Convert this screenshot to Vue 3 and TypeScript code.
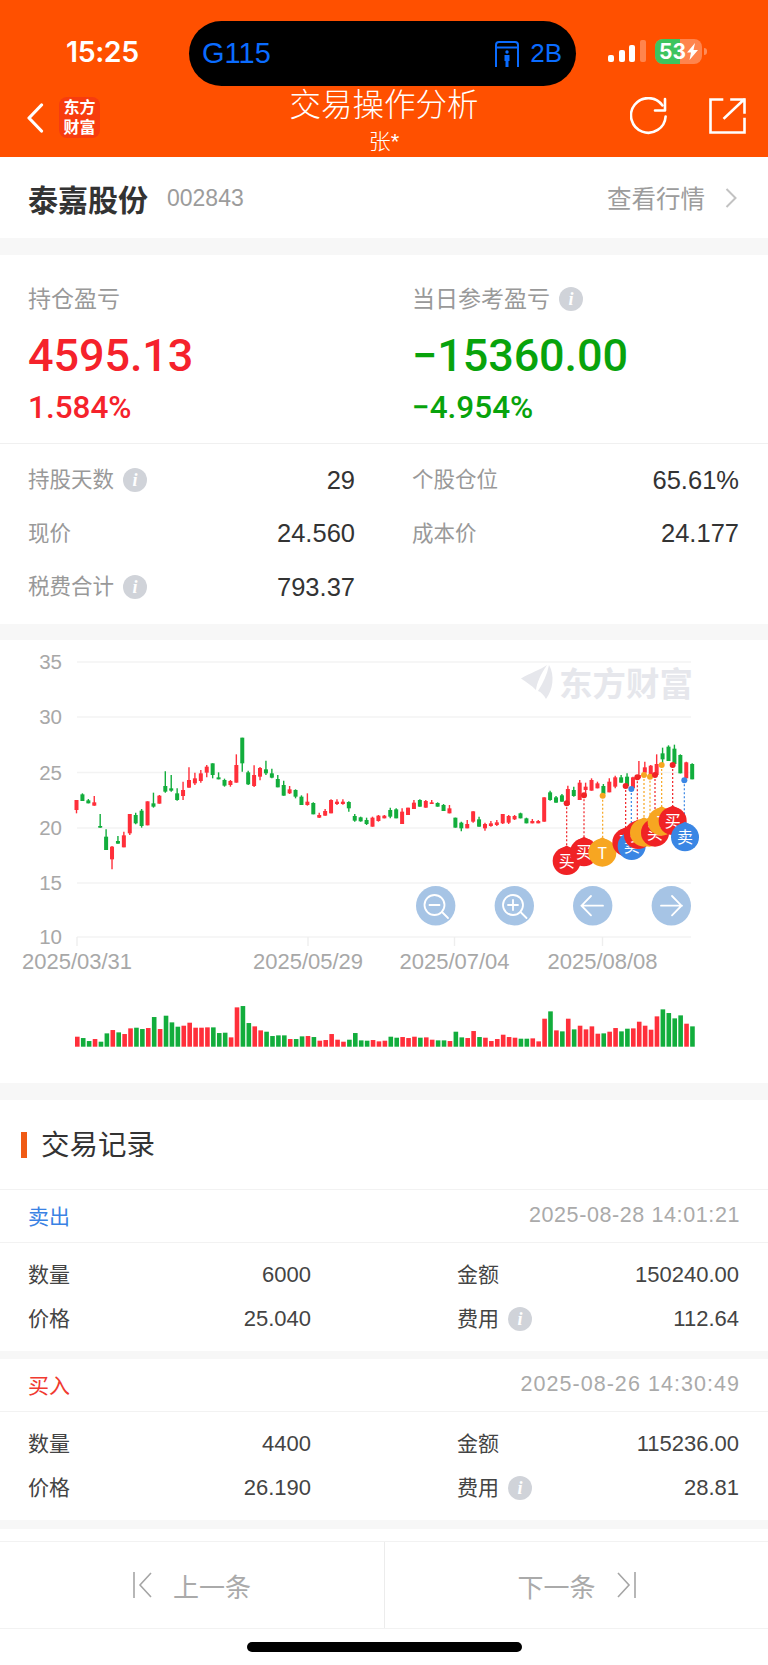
<script setup lang="ts">
type Candle = [number, number, number, number, number]
type Pin = { dx: number; dy: number; cx: number; cy: number; kind: 'buy' | 'sell' | 'toggle'; label: string }

const toY = (v: number) => 640 + v / 3
const toX = (v: number) => 384 + v / 3

const candleRaw: Candle[] = [
  [1,480,480,510,520],[0,460,463,483,483],[0,477,481,490,490],[1,468,487,497,497],[0,522,558,563,563],
  [0,568,590,630,630],[1,618,620,658,688],[0,588,603,611,611],[1,575,586,622,622],[1,522,522,580,585],
  [0,518,525,550,553],[0,507,512,558,563],[1,484,484,556,556],[0,458,490,500,503],[1,465,467,491,491],
  [0,394,438,455,458],[0,405,445,452,455],[0,445,460,480,482],[1,425,450,468,480],[1,382,420,443,443],
  [1,398,415,430,435],[1,390,400,423,428],[1,375,380,398,412],[0,370,370,405,415],[0,397,412,418,418],
  [0,416,420,437,440],[1,420,423,435,440],[1,343,375,428,428],[0,293,293,370,395],[0,392,397,433,435],
  [1,376,405,438,441],[1,381,384,410,421],[0,362,388,400,405],[0,386,400,413,415],[0,405,417,442,442],
  [0,422,435,467,467],[1,438,448,460,462],[0,448,450,470,475],[0,466,470,495,495],[1,460,485,495,497],
  [0,487,489,523,523],[1,518,525,533,534],[1,507,513,527,527],[1,478,480,520,520],[1,478,485,492,495],
  [1,478,485,492,494],[0,484,486,505,515],[0,522,528,542,545],[0,530,532,544,545],[0,533,540,552,555],
  [1,530,533,560,560],[1,525,527,543,545],[1,525,527,535,535],
  [0,503,510,530,535],[0,505,508,535,535],[1,505,515,552,552],[1,503,503,525,525],[1,480,488,507,507],
  [0,478,480,500,500],[1,480,483,503,503],[1,480,487,492,492],[0,487,489,500,500],[0,492,495,513,513],
  [1,495,505,520,520],[0,533,533,563,563],[0,545,548,565,574],[1,540,552,565,565],[1,514,514,545,548],
  [0,530,538,560,560],[1,548,552,565,572],[1,543,550,558,560],[1,540,547,555,558],[1,522,522,550,552],
  [1,525,528,548,552],[1,525,528,538,540],[0,518,520,535,535],[0,533,535,550,550],[1,537,543,550,550],
  [1,540,543,550,550],[1,472,472,545,545],[0,452,457,480,482],[0,468,472,488,488],[0,462,466,485,485],
  [1,437,447,495,497],[0,440,450,468,470],[1,420,428,480,480],[1,428,440,450,462],[1,415,420,452,452],
  [1,425,430,445,445],[0,432,438,462,462],[1,415,425,457,457],[1,407,412,440,445],[0,405,412,428,428],
  [0,400,410,438,438],[1,410,412,445,445],[1,363,405,415,415],[1,365,382,398,405],[1,375,377,405,405],
  [1,343,372,405,405],[0,323,340,358,370],[0,316,320,363,363],[0,314,326,372,372],[0,343,345,400,400],
  [1,365,367,415,415],[0,370,372,418,418],
]

const candles = candleRaw.map((c, i) => ({
  x: 76.5 + 5.92 * i,
  red: c[0] === 1,
  wickTop: toY(c[1]),
  bodyTop: toY(c[2]),
  bodyH: Math.max(1.5, (c[3] - c[2]) / 3),
  wickBottom: toY(c[4]),
}))

const volTopA: [number, number][] = [
  [1,530],[0,534],[0,543],[1,537],[0,545],[0,520],[1,510],[0,517],[1,522],[1,505],[0,503],[0,507],[1,504],
  [0,471],[1,507],[0,467],[0,487],[0,500],[1,497],[1,488],[1,503],[1,503],[1,502],[0,502],[0,519],[0,518],
  [1,532],[1,442],[0,438],[0,489],[1,499],[1,511],[0,515],[0,528],[0,526],[0,526],[1,537],[0,537],[0,529],
  [1,528],[0,531],[1,542],[1,540],[1,522],[1,539],[1,545],[0,539],[0,519],[0,541],[0,542],[1,540],[1,544],
]
const volTopB: [number, number][] = [
  [1,242],[0,230],[0,233],[1,231],[1,234],[1,230],[0,233],[1,232],[1,239],[0,241],[0,241],[1,243],[0,215],
  [0,232],[1,234],[1,213],[0,231],[1,233],[1,243],[1,237],[1,224],[1,231],[1,233],[0,236],[0,236],[1,235],
  [1,244],[1,176],[0,154],[1,211],[0,214],[1,176],[0,208],[1,197],[1,208],[1,199],[1,221],[0,220],[1,215],
  [1,204],[0,214],[0,206],[1,205],[1,185],[1,197],[1,209],[1,169],[0,148],[0,159],[0,175],[0,166],[1,191],[0,199],
]
const volumes = [
  ...volTopA.map(([r, t]) => ({ red: r === 1, h: (560 - t) / 3 })),
  ...volTopB.map(([r, t]) => ({ red: r === 1, h: (260 - t) / 3 })),
].map((v, i) => ({ ...v, x: 75 + 5.915 * i }))

const pinRaw: Pin[] = [
  { dx: 548, dy: 490, cx: 548, cy: 663, kind: 'buy', label: '买' },
  { dx: 600, dy: 466, cx: 600, cy: 637, kind: 'buy', label: '买' },
  { dx: 656, dy: 467, cx: 655, cy: 638, kind: 'toggle', label: 'T' },
  { dx: 725, dy: 438, cx: 727, cy: 607, kind: 'buy', label: '买' },
  { dx: 742, dy: 447, cx: 743, cy: 618, kind: 'sell', label: '卖' },
  { dx: 760, dy: 412, cx: 762, cy: 585, kind: 'buy', label: '买' },
  { dx: 780, dy: 405, cx: 780, cy: 578, kind: 'toggle', label: 'T' },
  { dx: 798, dy: 410, cx: 796, cy: 578, kind: 'toggle', label: 'T' },
  { dx: 813, dy: 405, cx: 813, cy: 578, kind: 'buy', label: '买' },
  { dx: 833, dy: 375, cx: 833, cy: 545, kind: 'toggle', label: 'T' },
  { dx: 866, dy: 375, cx: 866, cy: 543, kind: 'buy', label: '买' },
  { dx: 901, dy: 421, cx: 903, cy: 592, kind: 'sell', label: '卖' },
]
const pinColor = { buy: '#f02225', sell: '#3a86e4', toggle: '#f7a621' }
const pins = pinRaw.map((p) => ({
  x: toX(p.dx),
  y: toY(p.dy),
  cx: toX(p.cx),
  cy: toY(p.cy),
  color: pinColor[p.kind],
  label: p.label,
}))

const gridLines = [
  { y: 662, label: '35', tx: 62 },
  { y: 717, label: '30', tx: 62 },
  { y: 772.5, label: '25', tx: 62 },
  { y: 828, label: '20', tx: 62 },
  { y: 883, label: '15', tx: 62 },
  { y: 937, label: '10', tx: 62 },
]
const ticks = [
  { x: 77, label: '2025/03/31' },
  { x: 308, label: '2025/05/29' },
  { x: 454.5, label: '2025/07/04' },
  { x: 602.5, label: '2025/08/08' },
]

const metrics = [
  { label: '持股天数', info: true, value: '29' },
  { label: '个股仓位', info: false, value: '65.61%' },
  { label: '现价', info: false, value: '24.560' },
  { label: '成本价', info: false, value: '24.177' },
  { label: '税费合计', info: true, value: '793.37' },
]

const records = [
  { side: '卖出', cls: 'sell', time: '2025-08-28 14:01:21', qty: '6000', amount: '150240.00', price: '25.040', fee: '112.64' },
  { side: '买入', cls: 'buy', time: '2025-08-26 14:30:49', qty: '4400', amount: '115236.00', price: '26.190', fee: '28.81' },
]
</script>

<template>
  <div class="page">
    <header class="top">
      <div class="status">
        <span class="time">15:25</span>
        <div class="island">
          <span class="train">G115</span>
          <span class="seat">
            <svg width="26" height="26" viewBox="0 0 26 26" fill="none" stroke="#0a6cff" stroke-width="2">
              <path d="M2 26V4q0-3 3-3h16q3 0 3 3v22M2 6.500h22" />
              <circle cx="13" cy="11" r="1.700" fill="#0a6cff" stroke="none" />
              <path d="M10.500 14h5v6h-1v6h-3v-6h-1z" fill="#0a6cff" stroke="none" />
            </svg>
            <span class="seat-no">2B</span>
          </span>
        </div>
        <div class="signal">
          <i class="bar b1"></i><i class="bar b2"></i><i class="bar b3"></i><i class="bar b4"></i>
        </div>
        <div class="battery">
          <div class="cell">
            <i class="charge"></i>
            <span class="pct">53</span>
            <svg class="bolt" width="11" height="17" viewBox="0 0 11 17"><path d="M8 0 0 9.500h4L2.500 17 11 7H6.500z" fill="#fff" /></svg>
          </div>
          <i class="cap"></i>
        </div>
      </div>
      <div class="nav">
        <div class="nav-left">
          <svg width="18" height="30" viewBox="0 0 18 30" fill="none"><path d="M15.500 2 3 15l12.500 13" stroke="#fff" stroke-width="3.200" stroke-linecap="round" stroke-linejoin="round" /></svg>
          <div class="tile"><span>东方</span><span>财富</span></div>
        </div>
        <div class="nav-title">
          <div class="title">交易操作分析</div>
          <div class="sub">张*</div>
        </div>
        <div class="nav-right">
          <svg width="38" height="38" viewBox="0 0 38 38" fill="none" stroke="#fff" stroke-width="2.600" stroke-linecap="round">
            <path d="M35.600 19.500A17.300 17.300 0 1 1 32.500 8.500" />
            <path d="M35 2v11.500H25" stroke-linejoin="round" />
          </svg>
          <svg width="37" height="36" viewBox="0 0 37 36" fill="none" stroke="#fff" stroke-width="2.600" stroke-linecap="square">
            <path d="M13 1.500H1.500v33h34V21" />
            <path d="M15.500 20 35 1.500M22.500 1.500h13v13" />
          </svg>
        </div>
      </div>
    </header>

    <section class="stock">
      <div class="stock-id">
        <span class="stock-name">泰嘉股份</span>
        <span class="stock-code">002843</span>
      </div>
      <div class="stock-link">
        <span>查看行情</span>
        <svg width="12" height="20" viewBox="0 0 12 20" fill="none"><path d="m1.500 1 9 9-9 9" stroke="#c2c2c2" stroke-width="2" /></svg>
      </div>
    </section>

    <section class="summary">
      <div class="pnl">
        <div class="pnl-col">
          <div class="pnl-label">持仓盈亏</div>
          <div class="pnl-value up">4595.13</div>
          <div class="pnl-pct up">1.584%</div>
        </div>
        <div class="pnl-col">
          <div class="pnl-label">当日参考盈亏<i class="info">i</i></div>
          <div class="pnl-value down">−15360.00</div>
          <div class="pnl-pct down">−4.954%</div>
        </div>
      </div>
      <div class="metrics">
        <div v-for="m in metrics" :key="m.label" class="metric">
          <span class="metric-label">{{ m.label }}<i v-if="m.info" class="info">i</i></span>
          <span class="metric-value">{{ m.value }}</span>
        </div>
      </div>
    </section>

    <section class="chart">
      <svg width="768" height="443" viewBox="0 640 768 443">
        <line v-for="g in gridLines" :key="g.y" x1="77" x2="691" :y1="g.y" :y2="g.y" stroke="#f3f3f3" stroke-width="1.400" />
        <text v-for="g in gridLines" :key="g.label" class="axis" :x="g.tx" :y="g.y + 7" text-anchor="end">{{ g.label }}</text>
        <line v-for="t in ticks" :key="t.x" :x1="t.x" :x2="t.x" y1="937" y2="946" stroke="#eeeeee" stroke-width="1.400" />
        <text v-for="t in ticks" :key="t.label" class="axis date" :x="t.x" y="969" text-anchor="middle">{{ t.label }}</text>

        <path d="M521 678.500C530 673 540 670 547 665 540 675 537 683 536 690 531 685 526 682 521 678.500zM549 665C555 675 553 690 546 699 544 695 541 692 538 691 543 683 547 675 549 665z" fill="#e6e7ec" />
        <text class="mark" x="559" y="696">东方财富</text>

        <g v-for="(c, i) in candles" :key="i">
          <line :x1="c.x" :x2="c.x" :y1="c.wickTop" :y2="c.wickBottom" :stroke="c.red ? '#ff2f3a' : '#12ad3c'" stroke-width="1.400" />
          <rect :x="c.x - 2" :y="c.bodyTop" width="4" :height="c.bodyH" :fill="c.red ? '#ff2f3a' : '#12ad3c'" />
        </g>

        <g v-for="(p, i) in pins" :key="'l' + i">
          <line :x1="p.x" :x2="p.x" :y1="p.y" :y2="p.cy - 14" :stroke="p.color" stroke-width="1.200" stroke-dasharray="2 2" />
          <circle :cx="p.x" :cy="p.y" r="3" :fill="p.color" />
        </g>
        <g v-for="(p, i) in pins" :key="'p' + i">
          <path :d="`M${p.cx} ${p.cy - 15.5}l6.500 3.500h-13z`" :fill="p.color" />
          <circle :cx="p.cx" :cy="p.cy" r="14" :fill="p.color" />
          <text class="pin" :x="p.cx" :y="p.cy + 6" text-anchor="middle">{{ p.label }}</text>
        </g>

        <g fill="none" stroke="#fff" stroke-width="1.800" stroke-linecap="round">
          <circle cx="435.700" cy="905.700" r="19.700" fill="#a6c4e5" stroke="none" />
          <circle cx="434.500" cy="905" r="10" />
          <path d="M429.500 905h10M442 912l6 6" />
          <circle cx="514.300" cy="905.700" r="19.700" fill="#a6c4e5" stroke="none" />
          <circle cx="513" cy="905" r="10" />
          <path d="M508 905h10M513 900v10M520.500 912l6 6" />
          <circle cx="592.700" cy="905.700" r="19.700" fill="#a6c4e5" stroke="none" />
          <path d="M582 905.700h21M591 896l-9.500 9.700 9.500 9.700" />
          <circle cx="671.300" cy="905.700" r="19.700" fill="#a6c4e5" stroke="none" />
          <path d="M661 905.700h21M672 896l9.500 9.700-9.500 9.700" />
        </g>

        <rect v-for="(v, i) in volumes" :key="'v' + i" :x="v.x" :y="1046.7 - v.h" width="4.600" :height="v.h" :fill="v.red ? '#ff2f3a' : '#12ad3c'" />
      </svg>
    </section>

    <section class="records">
      <h2 class="records-title">交易记录</h2>
      <article v-for="r in records" :key="r.time" class="record">
        <div class="record-head">
          <span :class="r.cls">{{ r.side }}</span>
          <span class="record-time">{{ r.time }}</span>
        </div>
        <div class="record-grid">
          <div class="cell-l"><span>数量</span><span>{{ r.qty }}</span></div>
          <div class="cell-r"><span>金额</span><span>{{ r.amount }}</span></div>
          <div class="cell-l"><span>价格</span><span>{{ r.price }}</span></div>
          <div class="cell-r"><span>费用<i class="info">i</i></span><span>{{ r.fee }}</span></div>
        </div>
      </article>
    </section>

    <footer class="pager">
      <div class="pager-btn">
        <svg width="20" height="26" viewBox="0 0 20 26" fill="none" stroke="#a5a5a5" stroke-width="1.600"><path d="M1 0v26M18 1 7 13l11 12" /></svg>
        <span>上一条</span>
      </div>
      <div class="pager-btn">
        <span>下一条</span>
        <svg width="20" height="26" viewBox="0 0 20 26" fill="none" stroke="#a5a5a5" stroke-width="1.600"><path d="M19 0v26M2 1l11 12L2 25" /></svg>
      </div>
    </footer>
    <div class="home-row"><i class="home"></i></div>
  </div>
</template>

<style scoped>
.page {
  width: 768px;
  height: 1665px;
  overflow: hidden;
  background: #f7f7f7;
  font-family: "Liberation Sans", "Noto Sans CJK SC", sans-serif;
  color: #333;
}
.top {
  height: 157px;
  background: #ff5000;
  color: #fff;
}
.status {
  height: 86px;
  display: flex;
  align-items: flex-start;
  padding-left: 66px;
}
.time {
  width: 123px;
  margin-top: 36px;
  font: 600 28.500px/32px Inter, "Liberation Sans", sans-serif;
  letter-spacing: -.4px;
}
.island {
  width: 387px;
  height: 65px;
  margin-top: 21px;
  border-radius: 33px;
  background: #000;
  color: #0a6cff;
  display: flex;
  align-items: center;
  justify-content: space-between;
  padding: 0 14px 0 13px;
  box-sizing: border-box;
}
.train { font-size: 29px; }
.seat { display: flex; align-items: center; gap: 10px; }
.seat-no { font-size: 26px; }
.signal {
  width: 38px;
  height: 22px;
  margin: 40px 0 0 32px;
  display: flex;
  align-items: flex-end;
  gap: 4.500px;
}
.bar { width: 6px; background: #fff; border-radius: 2px; }
.b1 { height: 7px; }
.b2 { height: 12px; }
.b3 { height: 17px; }
.b4 { height: 22px; background: rgba(255, 255, 255, .3); }
.battery {
  margin: 39px 0 0 9px;
  display: flex;
  align-items: center;
  gap: 1.500px;
}
.cell {
  position: relative;
  width: 47px;
  height: 25px;
  border-radius: 8px;
  background: rgba(255, 255, 255, .3);
  overflow: hidden;
  display: flex;
  align-items: center;
}
.charge { position: absolute; left: 0; top: 0; bottom: 0; width: 25px; background: #3dc45f; }
.pct { position: relative; margin-left: 4px; font: 700 21px/25px Inter, "Liberation Sans", sans-serif; }
.bolt { position: relative; margin-left: 1px; }
.cap { width: 3px; height: 7px; border-radius: 0 3px 3px 0; background: rgba(255, 255, 255, .35); }
.nav {
  position: relative;
  height: 71px;
  display: flex;
  align-items: flex-start;
  justify-content: space-between;
  padding: 11px 22px 0 26px;
}
.nav-left { display: flex; align-items: center; gap: 15px; }
.tile {
  width: 41px;
  height: 41px;
  border-radius: 8px;
  background: #f73c0e;
  display: flex;
  flex-direction: column;
  align-items: center;
  justify-content: center;
  font-size: 16px;
  line-height: 20px;
  font-weight: 700;
}
.nav-title {
  position: absolute;
  left: 0;
  right: 0;
  top: 0;
  text-align: center;
}
.title { font-size: 31.500px; line-height: 36px; margin-top: 1px; font-weight: 300; }
.sub { font-size: 22px; line-height: 26px; margin-top: 6px; font-weight: 300; }
.nav-right { display: flex; align-items: center; gap: 41px; }
.stock {
  height: 81px;
  background: #fff;
  display: flex;
  align-items: center;
  justify-content: space-between;
  padding: 0 31px 0 28px;
}
.stock-id { display: flex; align-items: center; gap: 19px; }
.stock-name { font-size: 30px; font-weight: 700; color: #333; }
.stock-code { font-size: 23px; color: #9c9c9c; padding-top: 1px; }
.stock-link { display: flex; align-items: center; gap: 20px; font-size: 24.500px; color: #9c9c9c; }
.summary {
  margin-top: 17px;
  height: 369px;
  background: #fff;
}
.pnl {
  height: 189px;
  box-sizing: border-box;
  display: grid;
  grid-template-columns: 384px 1fr;
  padding: 32px 0 0 28px;
  border-bottom: 1px solid #f0f0f0;
}
.pnl-label {
  display: flex;
  align-items: center;
  font-size: 23px;
  line-height: 24px;
  color: #999;
}
.pnl-value {
  margin-top: 20px;
  font: 500 45px/50px Roboto, "Liberation Sans", sans-serif;
  letter-spacing: -.1px;
}
.pnl-pct {
  margin-top: 11px;
  font: 500 31.500px/32px Roboto, "Liberation Sans", sans-serif;
}
.up { color: #f5222b; }
.down { color: #08a30c; }
.info {
  display: inline-block;
  width: 24px;
  height: 24px;
  margin-left: 9px;
  border-radius: 50%;
  background: #d0d3d9;
  color: #fff;
  font: italic 700 18px/24px "Liberation Serif", serif;
  text-align: center;
  flex: none;
}
.metrics {
  display: grid;
  grid-template-columns: 327px 327px;
  column-gap: 57px;
  grid-auto-rows: 53.500px;
  padding: 9.500px 0 0 28px;
}
.metric {
  display: flex;
  align-items: center;
  justify-content: space-between;
}
.metric-label {
  display: flex;
  align-items: center;
  font-size: 21.500px;
  line-height: 24px;
  color: #999;
}
.metric-value { font-size: 25.500px; color: #333; }
.chart {
  margin-top: 16px;
  height: 443px;
  background: #fff;
}
.chart svg { display: block; }
.axis { font: 400 20.500px "Liberation Sans", sans-serif; fill: #a8a8a8; }
.date { font-size: 22px; }
.mark { font: 700 33.500px "Noto Sans CJK SC", sans-serif; fill: #e6e7ec; }
.pin { font: 400 16px "Noto Sans CJK SC", "Liberation Sans", sans-serif; fill: #fff; }
.records {
  margin-top: 17px;
  height: 429px;
  background: #f7f7f7;
}
.records-title {
  position: relative;
  margin: 0;
  height: 90px;
  box-sizing: border-box;
  padding-left: 41px;
  background: #fff;
  border-bottom: 1px solid #f2f2f2;
  font-size: 28.500px;
  font-weight: 400;
  line-height: 90px;
  color: #333;
}
.records-title::before {
  content: "";
  position: absolute;
  left: 21px;
  top: 32px;
  width: 6px;
  height: 26px;
  background: #f05a14;
}
.record {
  background: #fff;
  margin-bottom: 8px;
}
.record-head {
  height: 53px;
  box-sizing: border-box;
  display: flex;
  align-items: center;
  justify-content: space-between;
  padding: 0 28px 2px;
  border-bottom: 1px solid #f2f2f2;
  font-size: 21px;
}
.sell { color: #3a82e4; }
.buy { color: #f03a30; }
.record-time { color: #aaa; font-size: 21.500px; letter-spacing: .6px; }
.buy + .record-time { letter-spacing: 1.050px; }
.record-grid {
  display: grid;
  grid-template-columns: 283px 282px;
  column-gap: 146px;
  grid-auto-rows: 44px;
  padding: 10px 29px 0 28px;
  height: 108px;
  box-sizing: border-box;
}
.cell-l, .cell-r {
  display: flex;
  align-items: center;
  justify-content: space-between;
  font-size: 22px;
  color: #444;
}
.cell-l span:first-child, .cell-r span:first-child {
  display: flex;
  align-items: center;
  font-size: 21px;
  line-height: 24px;
  margin-bottom: 1px;
}
.pager {
  height: 88px;
  box-sizing: border-box;
  display: grid;
  grid-template-columns: 385px 1fr;
  background: #fff;
  border-top: 1px solid #f2f2f2;
  border-bottom: 1px solid #f2f2f2;
  box-shadow: 0 -12px 0 #fff;
  margin-top: 12px;
}
.pager-btn {
  display: flex;
  align-items: center;
  justify-content: center;
  gap: 20px;
  font-size: 26px;
  color: #aaa;
}
.pager-btn:first-child { border-right: 1px solid #ececec; }
.home-row {
  height: 37px;
  background: #fff;
  display: flex;
  justify-content: center;
  padding-top: 13px;
  box-sizing: border-box;
}
.home { width: 275px; height: 10px; border-radius: 5px; background: #000; }
</style>

<style>
body { margin: 0; background: #fff; }
</style>
